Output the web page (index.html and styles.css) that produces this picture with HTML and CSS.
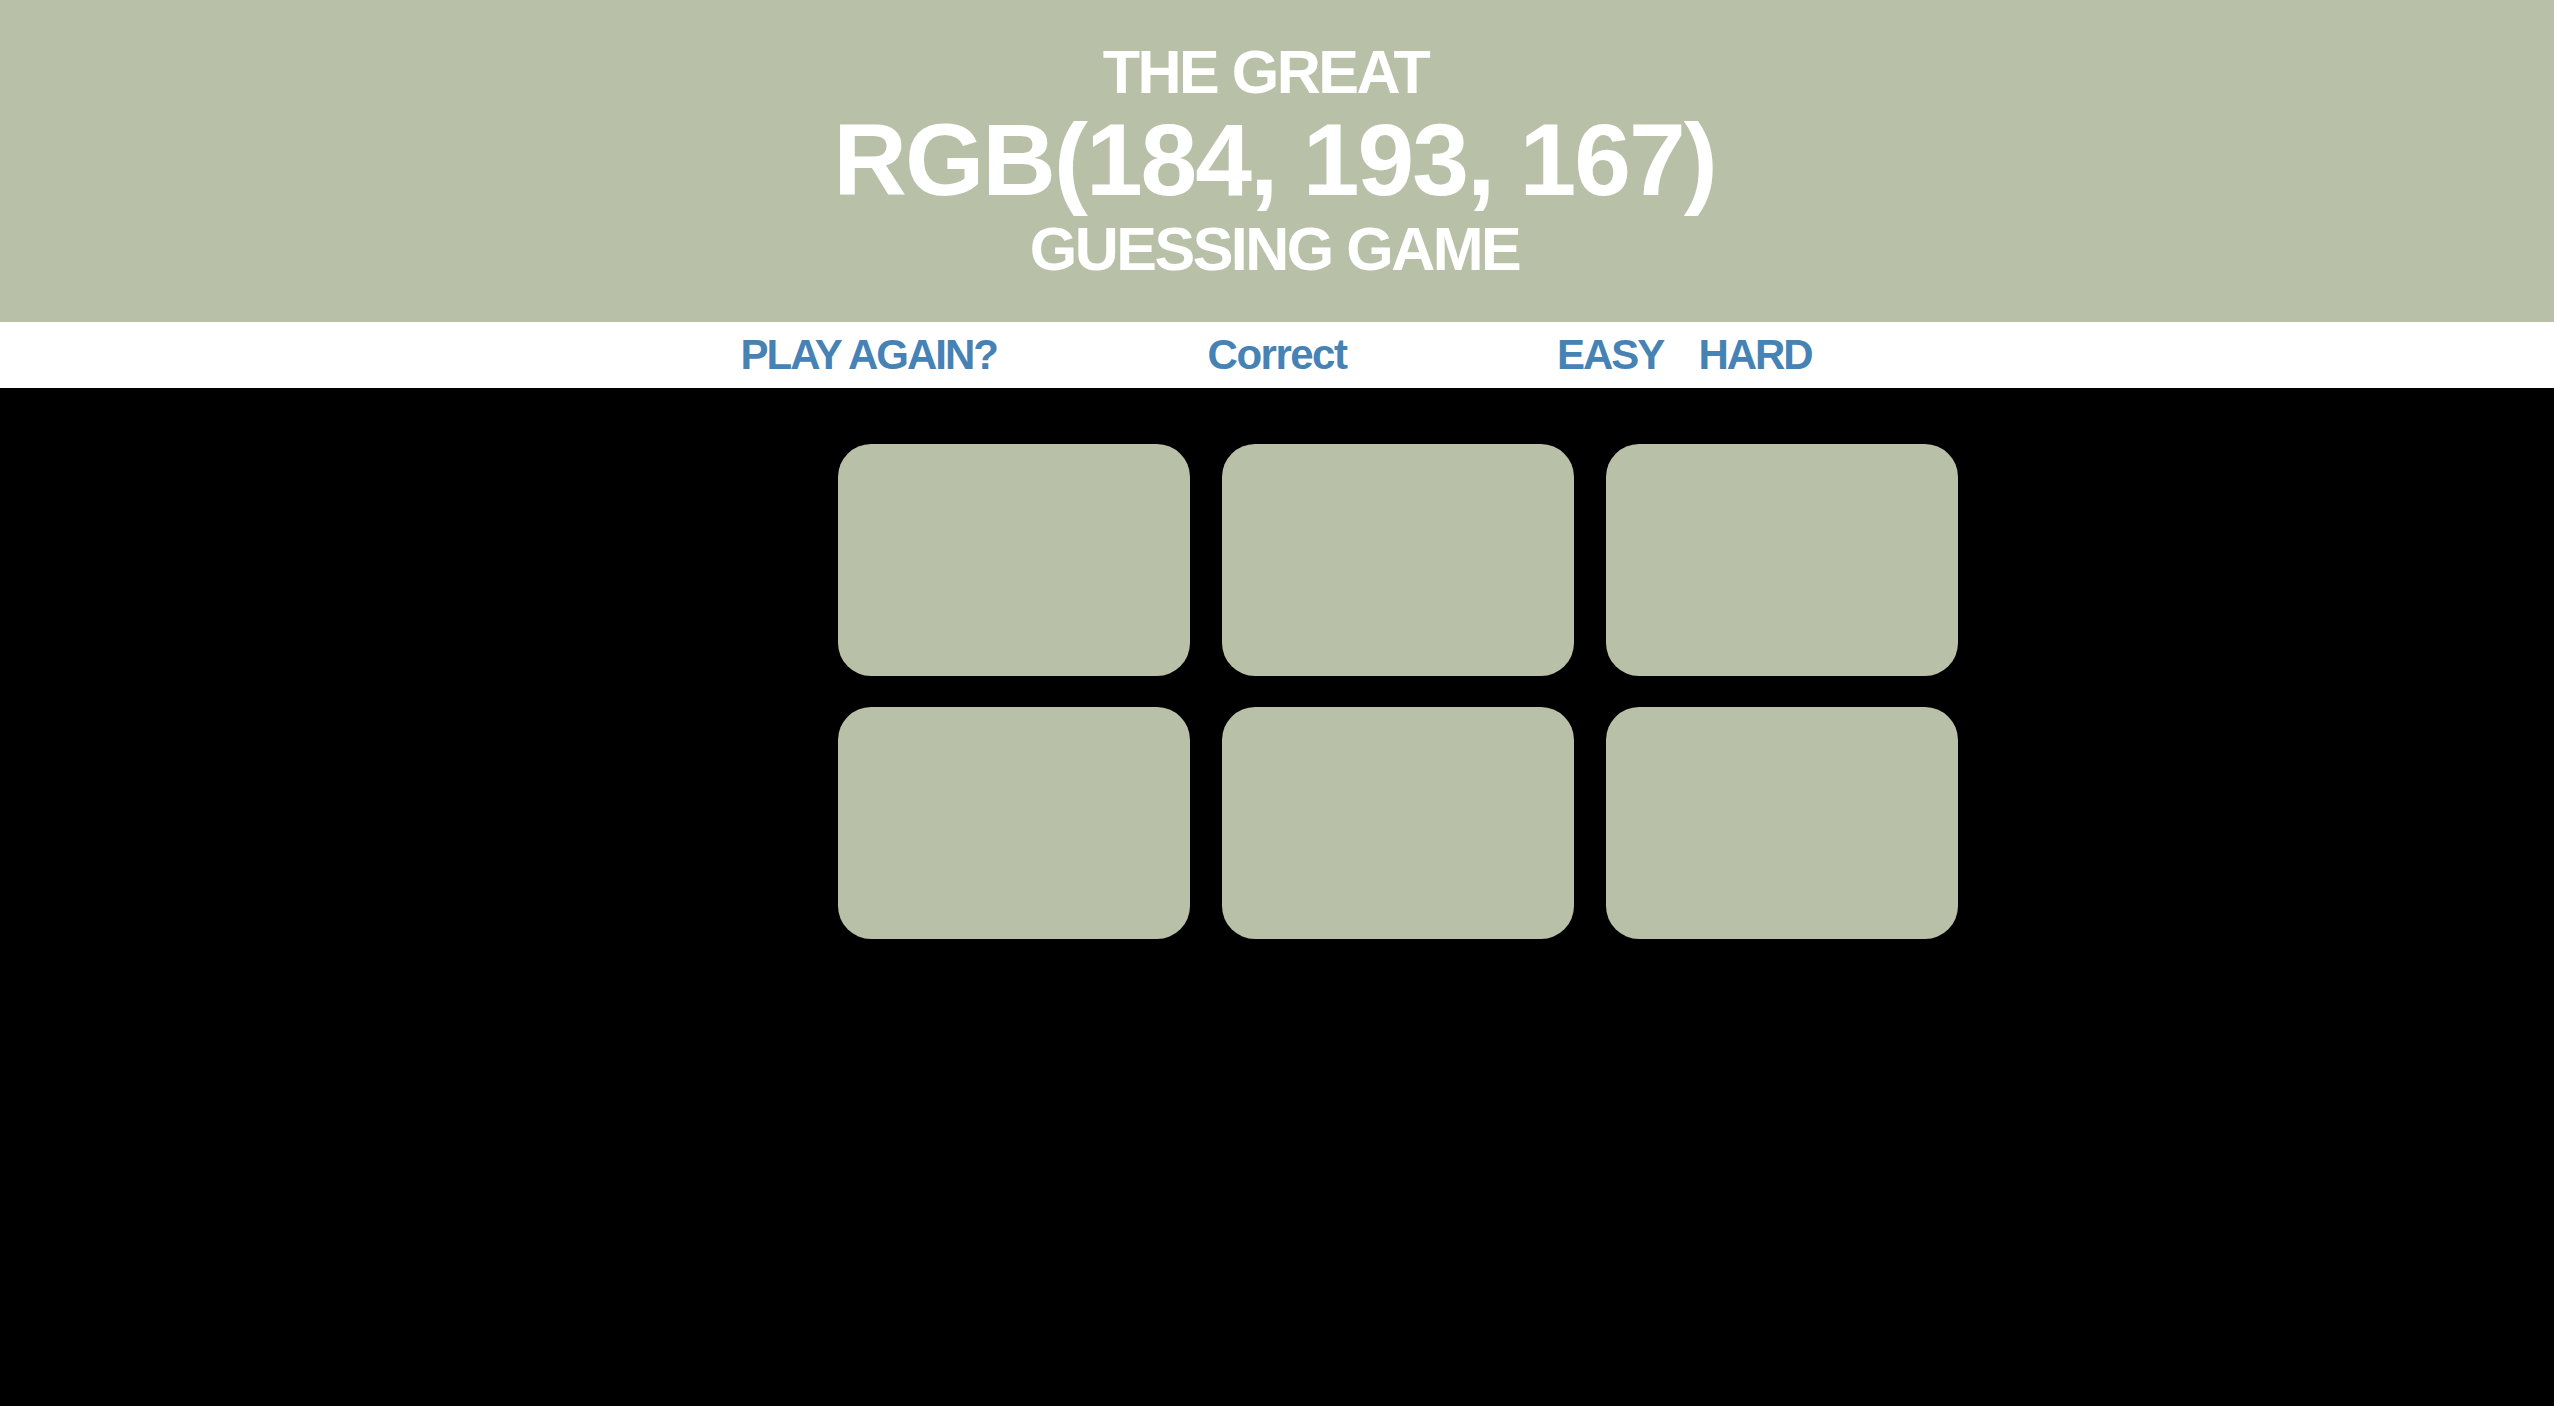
FILE: index.html
```html
<!DOCTYPE html>
<html lang="en">
<head>
<meta charset="utf-8">
<title>The Great RGB Guessing Game</title>
<link rel="stylesheet" href="styles.css">
</head>
<body>
<header class="banner">
  <h1 class="title">
    <span class="title-line title-first">THE GREAT</span>
    <span class="title-rgb">RGB(184, 193, 167)</span>
    <span class="title-line">GUESSING GAME</span>
  </h1>
</header>
<nav class="stripe">
  <div class="stripe-left"><button class="btn">PLAY AGAIN?</button></div>
  <span class="message">Correct</span>
  <div class="stripe-right">
    <button class="btn">EASY</button>
    <button class="btn">HARD</button>
  </div>
</nav>
<main class="board-wrap">
  <div class="board">
    <div class="square"></div>
    <div class="square"></div>
    <div class="square"></div>
    <div class="square"></div>
    <div class="square"></div>
    <div class="square"></div>
  </div>
</main>
</body>
</html>
```
FILE: styles.css
```css
html, body {
  margin: 0;
  padding: 0;
  background: #000;
  font-family: "Liberation Sans", Arial, Helvetica, sans-serif;
}

.banner {
  background: rgb(184, 193, 167);
  height: 322px;
  box-sizing: border-box;
  padding-top: 38px;
  color: #fff;
  text-align: center;
}

.title {
  margin: 0;
  padding-right: 5px;
  font-weight: 700;
}

.title-line {
  display: block;
  font-size: 61px;
  line-height: 68px;
  letter-spacing: -2.5px;
}

.title-first {
  padding-right: 18px;
}

.title-rgb {
  display: block;
  font-size: 102px;
  line-height: 109px;
  letter-spacing: -2px;
}

.stripe {
  background: #fff;
  height: 66px;
  display: grid;
  grid-template-columns: 1fr 510px 1fr;
  align-items: center;
}

.stripe-left {
  display: flex;
  justify-content: flex-end;
  padding-right: 25px;
}

.stripe-right {
  display: flex;
  gap: 35px;
  padding-left: 25px;
}

.btn {
  border: none;
  background: none;
  padding: 0;
  margin: 0;
  font-family: inherit;
  font-weight: 700;
  font-size: 42px;
  line-height: 66px;
  letter-spacing: -2px;
  color: steelblue;
  cursor: pointer;
}

.message {
  text-align: center;
  font-weight: 700;
  font-size: 42px;
  line-height: 66px;
  letter-spacing: -1.5px;
  color: steelblue;
}

.board-wrap {
  width: 1362px;
  margin: 56px auto 0;
  display: flex;
  justify-content: flex-end;
}

.board {
  display: grid;
  grid-template-columns: repeat(3, 352px);
  grid-auto-rows: 232px;
  gap: 31px 32px;
}

.square {
  background: rgb(184, 193, 167);
  border-radius: 33px;
}
```
